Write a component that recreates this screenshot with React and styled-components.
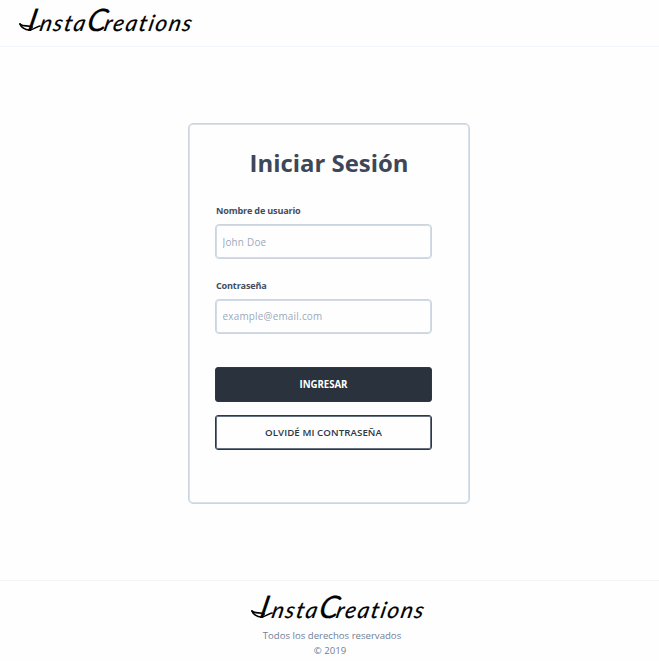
import React from "react";
import styled, { createGlobalStyle } from "styled-components";

const GlobalStyle = createGlobalStyle`
  *, *::before, *::after { box-sizing: border-box; }
  body { margin: 0; background: #fefefe; font-family: "Open Sans", sans-serif; }
`;

const Page = styled.div`
  height: 661px;
  display: flex;
  flex-direction: column;
  overflow: hidden;
`;

const Header = styled.header`
  height: 47px;
  padding: 1px 0 0 19px;
  border-bottom: 1px solid #f1f4f8;
`;

const Brand = styled.div`
  position: relative;
  width: 174px;
  height: 36px;
`;

const Flourish = styled.svg`
  position: absolute;
  left: 0;
  top: 20px;
  width: 24px;
  height: 12px;
  fill: none;
  stroke: #000;
  stroke-width: 1.7;
  stroke-linecap: round;
`;

const Wordmark = styled.div`
  display: flex;
  align-items: baseline;
  height: 36px;
  padding-left: 10px;
  line-height: 36px;
  font-family: "Lato", cursive;
  font-style: italic;
  font-size: 22.5px;
  letter-spacing: 1.7px;
  color: #000;
  white-space: nowrap;
  transform: skewX(-12deg);
  -webkit-text-stroke: 0.2px #000;
`;

const Capital = styled.span`
  font-size: 31px;
  letter-spacing: ${(p) => p.$gap}px;
`;

const Main = styled.main`
  flex: 1;
  padding: 75.5px 0 0 188px;
`;

const Card = styled.form`
  width: 282px;
  height: 381px;
  padding: 23.5px 37px 0 26px;
  border: 1px solid #cbd5e0;
  border-radius: 5px;
  box-shadow: inset 0 0 0 1px #d8e0e9;
`;

const Title = styled.h1`
  margin: 0 -12px 25px -1px;
  text-align: center;
  font-size: 23.9px;
  line-height: 32px;
  font-weight: 700;
  color: #3d4757;
`;

const Field = styled.label`
  display: block;
  height: ${(p) => p.$height}px;
  font-size: 9.1px;
  line-height: 14px;
  font-weight: 700;
  letter-spacing: -0.18px;
  color: #434d5e;
  padding-left: 1px;
`;

const Input = styled.input`
  display: block;
  width: 217px;
  height: 35px;
  margin: ${(p) => p.$gap}px 0 0 -1px;
  padding: 0 6.5px;
  border: 1px solid #cbd5e0;
  border-radius: 4px;
  box-shadow: inset 0 0 0 1px #d3dce6;
  background: #fefefe;
  font: 400 9.9px "Open Sans", sans-serif;
  letter-spacing: 0.24px;
  outline: none;
  &::placeholder { color: #9aaabd; opacity: 1; }
`;

const Button = styled.button`
  display: block;
  width: 217px;
  height: 35px;
  margin: 0 0 12.5px;
  padding: 0;
  border: 1px solid #2d3748;
  border-radius: 3px;
  box-shadow: inset 0 0 0 1px ${(p) => (p.$filled ? "#2a323e" : "#687180")};
  background: ${(p) => (p.$filled ? "#2a323e" : "#fefefe")};
  color: ${(p) => (p.$filled ? "#fff" : "#2d3748")};
  font: ${(p) => (p.$filled ? 700 : 600)} 9.7px "Open Sans", sans-serif;
  letter-spacing: ${(p) => (p.$filled ? -0.05 : 0.08)}px;
`;

const Footer = styled.footer`
  height: 81px;
  padding: 7px 0 0 5px;
  border-top: 1px solid #f3f5f8;
  display: flex;
  flex-direction: column;
  align-items: center;
  font-size: 9.6px;
  line-height: 15px;
  color: #718096;
`;

const FooterLogo = styled.div`
  height: 40px;
  padding-left: 12px;
`;

const Copyright = styled.div`
  padding-right: 4px;
`;

function Logo() {
  return (
    <Brand>
      <Flourish viewBox="0 0 24 12" aria-hidden="true">
        <path d="M1 3 C2 6 6 9 10 9 C15 9 18 5 21 5" />
        <path d="M1 3 C4 6 9 4 13 6" />
      </Flourish>
      <Wordmark>
        <Capital $gap={4}>I</Capital>nsta<Capital $gap={-2}>C</Capital>reations
      </Wordmark>
    </Brand>
  );
}

export default function App() {
  return (
    <Page>
      <GlobalStyle />
      <Header><Logo /></Header>
      <Main>
        <Card onSubmit={(e) => e.preventDefault()}>
          <Title>Iniciar Sesión</Title>
          <Field $height={75}>
            Nombre de usuario
            <Input $gap={6} type="text" placeholder="John Doe" />
          </Field>
          <Field $height={88}>
            Contraseña
            <Input $gap={5.5} type="password" placeholder="example@email.com" />
          </Field>
          <Button $filled type="submit">INGRESAR</Button>
          <Button type="button">OLVIDÉ MI CONTRASEÑA</Button>
        </Card>
      </Main>
      <Footer>
        <FooterLogo><Logo /></FooterLogo>
        <div>Todos los derechos reservados</div>
        <Copyright>© 2019</Copyright>
      </Footer>
    </Page>
  );
}
